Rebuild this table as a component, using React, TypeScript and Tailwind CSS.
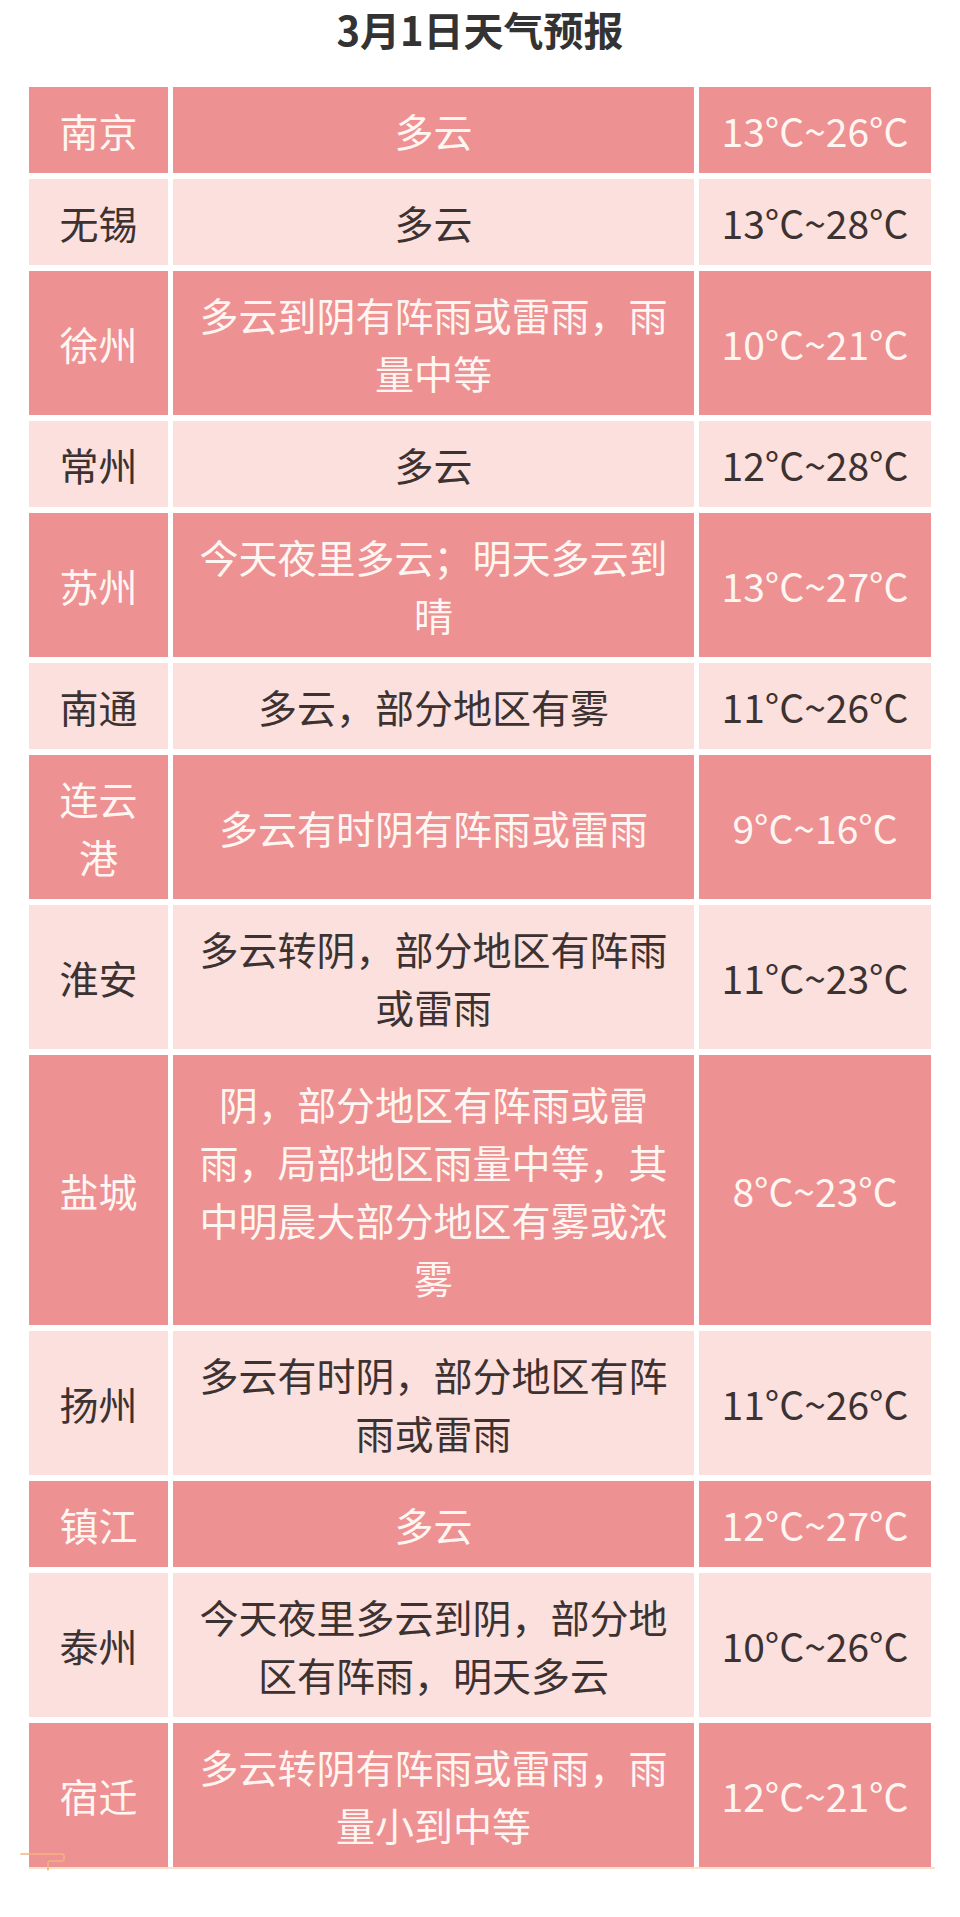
const rows = [
  { city: "南京", desc: "多云", temp: "13°C~26°C" },
  { city: "无锡", desc: "多云", temp: "13°C~28°C" },
  { city: "徐州", desc: "多云到阴有阵雨或雷雨，雨量中等", temp: "10°C~21°C" },
  { city: "常州", desc: "多云", temp: "12°C~28°C" },
  { city: "苏州", desc: "今天夜里多云；明天多云到晴", temp: "13°C~27°C" },
  { city: "南通", desc: "多云，部分地区有雾", temp: "11°C~26°C" },
  { city: "连云港", desc: "多云有时阴有阵雨或雷雨", temp: "9°C~16°C" },
  { city: "淮安", desc: "多云转阴，部分地区有阵雨或雷雨", temp: "11°C~23°C" },
  {
    city: "盐城",
    desc: "阴，部分地区有阵雨或雷雨，局部地区雨量中等，其中明晨大部分地区有雾或浓雾",
    temp: "8°C~23°C",
    tall: true,
  },
  { city: "扬州", desc: "多云有时阴，部分地区有阵雨或雷雨", temp: "11°C~26°C" },
  { city: "镇江", desc: "多云", temp: "12°C~27°C" },
  { city: "泰州", desc: "今天夜里多云到阴，部分地区有阵雨，明天多云", temp: "10°C~26°C" },
  { city: "宿迁", desc: "多云转阴有阵雨或雷雨，雨量小到中等", temp: "12°C~21°C" },
];

function Row({ row, dark }: { row: (typeof rows)[number]; dark: boolean }) {
  const tone = dark ? "bg-[#ed9193] text-[#fff6f2]" : "bg-[#fbe0dd] text-[#3d3232]";
  return (
    <>
      <div className={`${tone} flex items-center justify-center text-center px-[16px] py-[14px]`}>
        {row.city}
      </div>
      <div
        className={`${tone} flex items-center justify-center text-center px-[24px] ${
          row.tall ? "py-[19px]" : "py-[14px]"
        }`}
      >
        {row.desc}
      </div>
      <div className={`${tone} flex items-center justify-center text-center px-[8px] py-[14px]`}>
        {row.temp}
      </div>
    </>
  );
}

export default function App() {
  return (
    <div className="min-h-[1917px] w-full bg-white font-['Noto_Sans_CJK_SC','Noto_Sans',sans-serif]">
      <h1 className="h-[87px] pt-[9px] text-center text-[40px] leading-[40px] font-bold text-[#333333]">
        3月1日天气预报
      </h1>

      <div className="relative ml-[29px] w-[902px]">
        <div className="grid grid-cols-[139px_521px_232px] gap-x-[5px] gap-y-[6px] text-[39px] leading-[58px] font-normal">
          {rows.map((row, i) => (
            <Row key={row.city} row={row} dark={i % 2 === 0} />
          ))}
        </div>
        <div className="h-[2px] w-[906px] bg-[#fbe3c9]" />

        {/* little scroll ornament at the bottom-left corner */}
        <svg
          className="absolute left-[-9px] bottom-[-2px]"
          width="52"
          height="22"
          viewBox="0 0 52 22"
          fill="none"
        >
          <path
            d="M1 5 H42 Q44 5 44 7 V10 Q44 12 42 12 H30 Q28 12 28 14 V21"
            stroke="#f2b27c"
            strokeWidth="1.6"
            strokeLinecap="round"
          />
        </svg>
      </div>
    </div>
  );
}
